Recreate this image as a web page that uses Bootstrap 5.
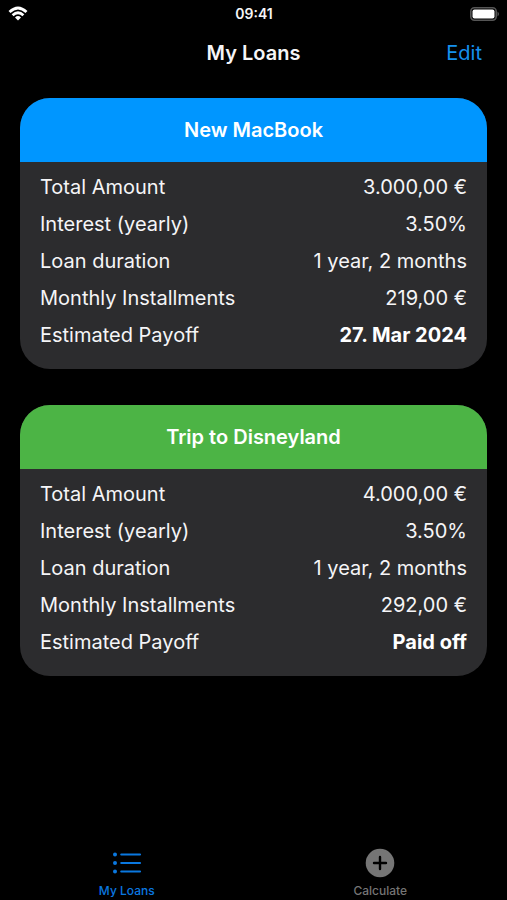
<!DOCTYPE html>
<html lang="en">
<head>
<meta charset="utf-8">
<meta name="viewport" content="width=device-width, initial-scale=1">
<title>My Loans</title>
<link href="https://cdn.jsdelivr.net/npm/bootstrap@5.3.0/dist/css/bootstrap.min.css" rel="stylesheet">
<style>
body{background:#000;color:#f5f5f7;font-family:Inter,"Liberation Sans",sans-serif;font-size:20px;line-height:24px}
.three-col{display:grid;grid-template-columns:1fr auto 1fr;align-items:center}
.status-bar{height:27px;padding:0 7px 0 8px;font-size:14px;line-height:16px}
.title-bar{height:51px;padding:0 25px}
.title-bar h1{font-size:20px;line-height:24px}
.title-bar a{color:#1590ee}
.loans{padding:20px 20px 0;gap:36px}
.loan{background:#2c2c2e;border-radius:30px;overflow:hidden}
.loan h2{font-size:20px;line-height:24px;padding:20px;color:#fff}
.loan-blue h2{background:#0096ff}
.loan-green h2{background:#4cb445}
.loan dl{padding:6px 20px 16px}
.loan-row{height:37px}
.loan dd{font-weight:400}
.loan dd.payoff{font-weight:700;color:#fff}
.tab{font-size:12px;line-height:16px;font-weight:500;color:#757575;gap:5px;padding-bottom:1px}
.tab[aria-current]{color:#0a78e0}
</style>
<script src="https://cdn.jsdelivr.net/npm/bootstrap@5.3.0/dist/js/bootstrap.bundle.min.js" defer></script>
</head>
<body class="d-flex flex-column min-vh-100">
<header>
<div class="status-bar three-col">
<svg width="20" height="16" viewBox="0 0 20 16" fill="none" stroke="#fff" stroke-width="2.8" role="img" aria-label="Wi-Fi"><path d="M1.5 6Q10-2.2 18.5 6M4.6 9.2Q10 4.2 15.4 9.2"/><path fill="#fff" stroke="none" d="M7 11.4Q10 8.8 13 11.4L10 14.6Z"/></svg>
<span class="fw-semibold">09:41</span>
<svg class="ms-auto" width="30" height="14" viewBox="0 0 30 14" role="img" aria-label="Battery"><rect x=".8" y=".8" width="25.4" height="12.4" rx="3.6" fill="none" stroke="#555" stroke-width="1.6"/><rect x="2.5" y="2.5" width="22" height="9" rx="2" fill="#fff"/><path d="M27.5 4.5Q30.5 7 27.5 9.5Z" fill="#555"/></svg>
</div>
<div class="title-bar three-col">
<span></span><h1 class="fw-semibold m-0">My Loans</h1><a href="#" class="text-decoration-none ms-auto">Edit</a>
</div>
</header>
<main class="loans d-flex flex-column flex-grow-1">
<section class="loan loan-blue">
<h2 class="fw-semibold text-center m-0">New MacBook</h2>
<dl class="m-0">
<div class="loan-row d-flex align-items-center justify-content-between"><dt class="fw-normal">Total Amount</dt><dd class="m-0">3.000,00 €</dd></div>
<div class="loan-row d-flex align-items-center justify-content-between"><dt class="fw-normal">Interest (yearly)</dt><dd class="m-0">3.50%</dd></div>
<div class="loan-row d-flex align-items-center justify-content-between"><dt class="fw-normal">Loan duration</dt><dd class="m-0">1 year, 2 months</dd></div>
<div class="loan-row d-flex align-items-center justify-content-between"><dt class="fw-normal">Monthly Installments</dt><dd class="m-0">219,00 €</dd></div>
<div class="loan-row d-flex align-items-center justify-content-between"><dt class="fw-normal">Estimated Payoff</dt><dd class="payoff m-0">27. Mar 2024</dd></div>
</dl>
</section>
<section class="loan loan-green">
<h2 class="fw-semibold text-center m-0">Trip to Disneyland</h2>
<dl class="m-0">
<div class="loan-row d-flex align-items-center justify-content-between"><dt class="fw-normal">Total Amount</dt><dd class="m-0">4.000,00 €</dd></div>
<div class="loan-row d-flex align-items-center justify-content-between"><dt class="fw-normal">Interest (yearly)</dt><dd class="m-0">3.50%</dd></div>
<div class="loan-row d-flex align-items-center justify-content-between"><dt class="fw-normal">Loan duration</dt><dd class="m-0">1 year, 2 months</dd></div>
<div class="loan-row d-flex align-items-center justify-content-between"><dt class="fw-normal">Monthly Installments</dt><dd class="m-0">292,00 €</dd></div>
<div class="loan-row d-flex align-items-center justify-content-between"><dt class="fw-normal">Estimated Payoff</dt><dd class="payoff m-0">Paid off</dd></div>
</dl>
</section>
</main>
<nav class="d-flex" aria-label="Main">
<a href="#" class="tab d-flex flex-column align-items-center text-decoration-none w-50" aria-current="page">
<svg width="30" height="30" viewBox="0 0 30 30" fill="none" stroke="currentColor" stroke-width="2.2" stroke-linecap="round"><path d="M9.3 6.5H28M9.3 15H28M9.3 23.5H28"/><path stroke-width="4" d="M3 6.5h0M3 15h0M3 23.5h0"/></svg>My Loans</a>
<a href="#" class="tab d-flex flex-column align-items-center text-decoration-none w-50">
<svg width="30" height="30" viewBox="0 0 30 30"><circle cx="15" cy="15" r="14.3" fill="#757575"/><path d="M15 9V21M9 15H21" stroke="#000" stroke-width="2.4" stroke-linecap="round"/></svg>Calculate</a>
</nav>
</body>
</html>
